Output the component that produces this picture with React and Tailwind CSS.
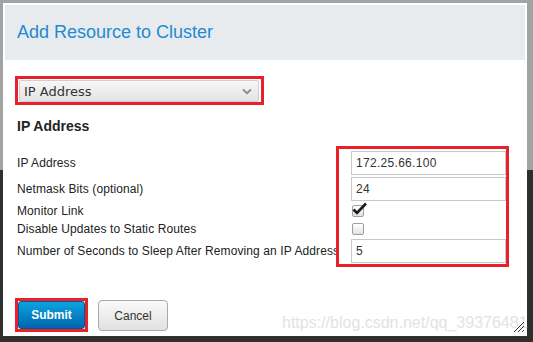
import React from "react";

function Chevron() {
  return (
    <svg width="10" height="7" viewBox="0 0 10 7" className="shrink-0">
      <path d="M1 1.5 L5 5.2 L9 1.5" fill="none" stroke="#8a8a8a" strokeWidth="1.8" />
    </svg>
  );
}

function CheckedBox() {
  return (
    <div className="relative w-[12px] h-[12px]">
      <div className="w-[12px] h-[12px] rounded-[2px] border border-[#a0a0a0] bg-[linear-gradient(to_bottom,#ffffff,#e2e2e2)]" />
      <svg width="16" height="14" viewBox="0 0 16 14" className="absolute left-[0px] top-[-3px]">
        <path d="M1.5 7.5 L5 11 L14 1.5" fill="none" stroke="#1a1a1a" strokeWidth="2.6" strokeLinejoin="miter" />
      </svg>
    </div>
  );
}

function UncheckedBox() {
  return (
    <div className="w-[12px] h-[12px] rounded-[2px] border border-[#a0a0a0] bg-[linear-gradient(to_bottom,#ffffff,#e2e2e2)]" />
  );
}

function TextInput({ value }) {
  return (
    <div className="h-[24px] w-full border border-[#c8c8c8] bg-white flex items-center pl-[4px] text-[12px] text-[#333] font-['Liberation_Sans',sans-serif] tracking-[0.3px]">
      {value}
    </div>
  );
}

export default function App() {
  return (
    <div className="w-[533px] h-[342px] overflow-hidden pt-[3px] pl-[3px] bg-[linear-gradient(to_bottom,#a3a3a3_170px,#2f2f2f_170px)] font-['Liberation_Sans',sans-serif]">
      <div className="relative w-[524px] h-[333px] bg-white p-[2px] flex flex-col">
        {/* header */}
        <div className="h-[55px] bg-[#e7ebee] flex items-center pl-[12px] pb-[2px]">
          <span className="text-[18px] text-[#1f8ad2] leading-none">Add Resource to Cluster</span>
        </div>

        {/* body */}
        <div className="flex flex-col pl-[10px]">
          {/* select */}
          <div className="mt-[16px] w-[249px] h-[29px] border-[3px] border-[#e8202a] pl-[1px] pt-[1px]">
            <div className="h-[22px] w-[240px] rounded-[2px] border border-[#cfcfcf] bg-[linear-gradient(to_bottom,#f7f7f7,#e3e3e3)] flex items-center justify-between pl-[4px] pr-[6px]">
              <span className="text-[13px] text-[#333] font-['DejaVu_Sans',sans-serif] leading-none">IP Address</span>
              <Chevron />
            </div>
          </div>

          {/* section heading */}
          <div className="mt-[14px] pl-[2px] text-[14px] font-bold text-[#222] leading-none">IP Address</div>

          {/* form */}
          <div className="mt-[13px] flex">
            <div className="w-[321px] pl-[2px] pt-[5px] flex flex-col text-[12px] text-[#222] whitespace-nowrap tracking-[0.1px]">
              <div className="h-[24px] flex items-center">IP Address</div>
              <div className="h-[24px] mt-[2px] flex items-center">Netmask Bits (optional)</div>
              <div className="h-[19px] flex items-center">Monitor Link</div>
              <div className="h-[18px] flex items-center">Disable Updates to Static Routes</div>
              <div className="h-[24px] mt-[1px] flex items-center">Number of Seconds to Sleep After Removing an IP Address</div>
            </div>
            <div className="relative z-10 w-[173px] h-[121px] border-[3px] border-[#e8202a] pl-[12px] pt-[2px] flex flex-col">
              <TextInput value="172.25.66.100" />
              <div className="mt-[2px]"><TextInput value="24" /></div>
              <div className="h-[19px] flex items-center pl-[1px]"><CheckedBox /></div>
              <div className="h-[18px] flex items-center pl-[1px]"><UncheckedBox /></div>
              <div className="mt-[1px]"><TextInput value="5" /></div>
            </div>
          </div>

          {/* footer */}
          <div className="mt-[31px] flex items-center gap-[10px]">
            <div className="w-[73px] h-[34px] border-[3px] border-[#e8202a]">
              <div className="w-full h-full rounded-[3px] border border-[#005a96] bg-[linear-gradient(to_bottom,#0ca3e2,#0066ad)] flex items-center justify-center text-white text-[12px] font-bold">
                Submit
              </div>
            </div>
            <div className="w-[70px] h-[31px] rounded-[4px] border border-[#a9a9a9] bg-[linear-gradient(to_bottom,#fafafa,#e1e1e1)] flex items-center justify-center text-[#333] text-[12px] mt-[1px]">
              Cancel
            </div>
          </div>
        </div>

        {/* watermark */}
        <div className="absolute left-[279px] top-[312px] text-[16px] text-[#e3e3e3] leading-none whitespace-nowrap">
          https://blog.csdn.net/qq_39376481
        </div>
        {/* resize grip */}
        <svg width="12" height="12" viewBox="0 0 12 12" className="absolute right-[2px] bottom-[3px]">
          <path d="M11 1 L1 11 M11 5 L5 11 M11 9 L9 11" stroke="#333" strokeWidth="1" />
        </svg>
      </div>
    </div>
  );
}
